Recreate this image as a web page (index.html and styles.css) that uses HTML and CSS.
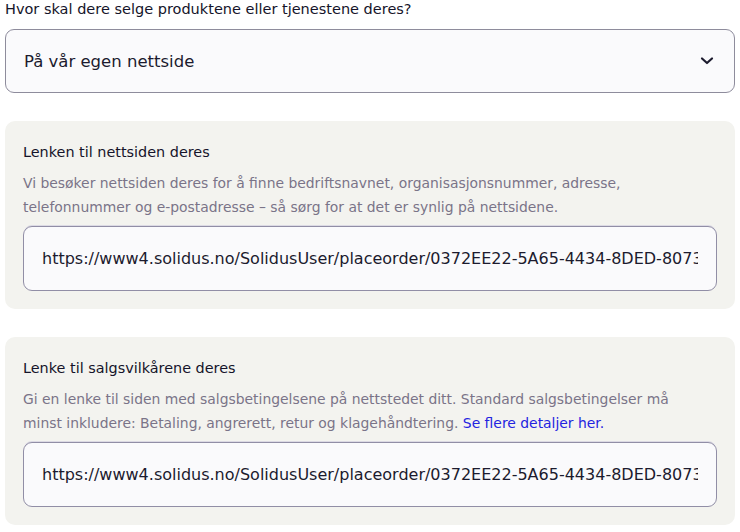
FILE: index.html
```html
<!DOCTYPE html>
<html lang="no">
<head>
<meta charset="utf-8">
<link rel="stylesheet" href="styles.css">
</head>
<body>
<div class="page">
  <div class="question">Hvor skal dere selge produktene eller tjenestene deres?</div>
  <div class="select">
    <span class="select-value">På vår egen nettside</span>
    <svg class="chevron" width="14" height="10" viewBox="0 0 14 10"><path d="M2 2.5 L7 7 L12 2.5" fill="none" stroke="#1c1b2e" stroke-width="2.2" stroke-linecap="round" stroke-linejoin="round"/></svg>
  </div>

  <div class="panel">
    <div class="label">Lenken til nettsiden deres</div>
    <div class="desc">Vi besøker nettsiden deres for å finne bedriftsnavnet, organisasjonsnummer, adresse, telefonnummer og e-postadresse – så sørg for at det er synlig på nettsidene.</div>
    <div class="input"><span class="input-text">https://www4.solidus.no/SolidusUser/placeorder/0372EE22-5A65-4434-8DED-80734F2A1B9C</span></div>
  </div>

  <div class="panel">
    <div class="label">Lenke til salgsvilkårene deres</div>
    <div class="desc">Gi en lenke til siden med salgsbetingelsene på nettstedet ditt. Standard salgsbetingelser må minst inkludere: Betaling, angrerett, retur og klagehåndtering. <a class="link" href="#">Se flere detaljer her.</a></div>
    <div class="input"><span class="input-text">https://www4.solidus.no/SolidusUser/placeorder/0372EE22-5A65-4434-8DED-80734F2A1B9C</span></div>
  </div>
</div>
</body>
</html>
```

FILE: styles.css
```css
* { box-sizing: border-box; }
html, body { margin: 0; padding: 0; background: #ffffff; }
body {
  font-family: "DejaVu Sans", "Open Sans", sans-serif;
  color: #1c1b2e;
}
.page {
  width: 740px;
  padding: 0 5px;
  display: flex;
  flex-direction: column;
}
.question {
  font-size: 14.5px;
  font-weight: 500;
  line-height: 20px;
  height: 20px;
  margin-top: -1px;
  color: #15142a;
}
.select {
  margin-top: 10px;
  height: 64px;
  border: 1px solid #8e8c9c;
  border-radius: 9px;
  background: #fafafc;
  display: flex;
  align-items: center;
  justify-content: space-between;
  padding: 0 20px 0 18px;
}
.select-value {
  font-size: 16.5px;
  color: #1c1b2e;
}
.chevron { display: block; }
.panel {
  margin-top: 28px;
  height: 188px;
  background: #f3f3ef;
  border-radius: 10px;
  padding: 21px 18px 17px 18px;
  display: flex;
  flex-direction: column;
}
.label {
  font-size: 14.4px;
  font-weight: 500;
  line-height: 20px;
  color: #15142a;
}
.desc {
  margin-top: 10px;
  max-width: 665px;
  font-size: 13.9px;
  line-height: 23.5px;
  color: #7a7488;
}
.link {
  color: #2323e0;
  text-decoration: none;
}
.input {
  margin-top: 7px;
  height: 65px;
  border: 1px solid #918ea6;
  border-radius: 9px;
  background: #fafafc;
  box-shadow: 0 -2px 0 -1px #dcdae4;
  display: flex;
  align-items: center;
  padding: 0 18px;
  overflow: hidden;
}
.input-text {
  font-size: 16px;
  white-space: nowrap;
  overflow: hidden;
  color: #1c1b2e;
}
```
